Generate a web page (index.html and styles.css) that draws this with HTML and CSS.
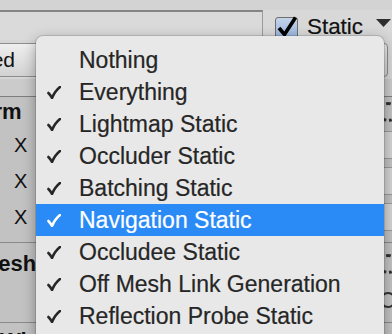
FILE: index.html
```html
<!DOCTYPE html>
<html lang="en">
<head>
    <meta charset="UTF-8">
    <title>Static Flags Menu</title>
    <link rel="stylesheet" href="styles.css">
</head>
<body>
    <div class="inspector">
        <div class="header-row">
            <div class="name-field"></div>
            <div class="static-toggle">
                <span class="checkbox">
                    <svg width="22" height="22" viewBox="0 0 22 22"><path d="M3 12 L8.5 18.5 L19.5 1.5" fill="none" stroke="#000" stroke-width="3.6" stroke-linejoin="miter"/></svg>
                </span>
                <span class="static-label">Static</span>
                <svg class="caret" width="15" height="8" viewBox="0 0 15 8"><path d="M0 0 H15 L7.5 8 Z" fill="#2e2e2e"/></svg>
            </div>
        </div>

        <div class="tag-row">
            <div class="tag-field">Untagged</div>
            <div class="layer-field">Default</div>
        </div>
        <div class="spacer-row"></div>

        <!-- Transform component -->
        <section class="component">
            <div class="component-header">
                <span class="component-title">Transform</span>
                <span class="gear"></span>
            </div>
            <div class="prop-row"><span class="axis">X</span><span class="value-field"></span></div>
            <div class="prop-row"><span class="axis">X</span><span class="value-field"></span></div>
            <div class="prop-row"><span class="axis">X</span><span class="value-field"></span></div>
        </section>

        <!-- Mesh component -->
        <section class="component mesh">
            <div class="component-header">
                <span class="component-title">Mesh</span>
                <span class="gear"></span>
            </div>
            <div class="prop-row tall"><span class="axis"></span><span class="target"></span></div>
        </section>

        <div class="footer-row">Wi</div>
    </div>

    <ul class="flags-menu">
        <li class="menu-item"><span class="check"></span>Nothing</li>
        <li class="menu-item checked"><span class="check"><svg width="14" height="13" viewBox="0 0 14 13"><path d="M1.4 7 Q3.4 8.8 5 12 Q8 5 13 1" fill="none" stroke="currentColor" stroke-width="2.6" stroke-linecap="round"/></svg></span>Everything</li>
        <li class="menu-item checked"><span class="check"><svg width="14" height="13" viewBox="0 0 14 13"><path d="M1.4 7 Q3.4 8.8 5 12 Q8 5 13 1" fill="none" stroke="currentColor" stroke-width="2.6" stroke-linecap="round"/></svg></span>Lightmap Static</li>
        <li class="menu-item checked"><span class="check"><svg width="14" height="13" viewBox="0 0 14 13"><path d="M1.4 7 Q3.4 8.8 5 12 Q8 5 13 1" fill="none" stroke="currentColor" stroke-width="2.6" stroke-linecap="round"/></svg></span>Occluder Static</li>
        <li class="menu-item checked"><span class="check"><svg width="14" height="13" viewBox="0 0 14 13"><path d="M1.4 7 Q3.4 8.8 5 12 Q8 5 13 1" fill="none" stroke="currentColor" stroke-width="2.6" stroke-linecap="round"/></svg></span>Batching Static</li>
        <li class="menu-item checked active"><span class="check"><svg width="14" height="13" viewBox="0 0 14 13"><path d="M1.4 7 Q3.4 8.8 5 12 Q8 5 13 1" fill="none" stroke="currentColor" stroke-width="2.6" stroke-linecap="round"/></svg></span>Navigation Static</li>
        <li class="menu-item checked"><span class="check"><svg width="14" height="13" viewBox="0 0 14 13"><path d="M1.4 7 Q3.4 8.8 5 12 Q8 5 13 1" fill="none" stroke="currentColor" stroke-width="2.6" stroke-linecap="round"/></svg></span>Occludee Static</li>
        <li class="menu-item checked"><span class="check"><svg width="14" height="13" viewBox="0 0 14 13"><path d="M1.4 7 Q3.4 8.8 5 12 Q8 5 13 1" fill="none" stroke="currentColor" stroke-width="2.6" stroke-linecap="round"/></svg></span>Off Mesh Link Generation</li>
        <li class="menu-item checked"><span class="check"><svg width="14" height="13" viewBox="0 0 14 13"><path d="M1.4 7 Q3.4 8.8 5 12 Q8 5 13 1" fill="none" stroke="currentColor" stroke-width="2.6" stroke-linecap="round"/></svg></span>Reflection Probe Static</li>
    </ul>
</body>
</html>
```

FILE: styles.css
```css
:root {
    --panel-bg: #c2c2c2;
    --menu-bg: #e8e8e8;
    --menu-text: #262626;
    --highlight: #2a8af6;
    --divider: #7e7e7e;
}

body {
    margin: 0;
    width: 392px;
    height: 334px;
    overflow: hidden;
    position: relative;
    font-family: "Liberation Sans", Arial, sans-serif;
    background-color: var(--panel-bg);
}

.inspector {
    display: flex;
    flex-direction: column;
}

/* top row: name field + static toggle */
.header-row {
    display: flex;
    align-items: flex-start;
    height: 40px;
    padding-top: 10px;
    box-sizing: border-box;
    background: linear-gradient(#d3d3d3 0, #d3d3d3 10px, #d8d8d8 10px);
}

.name-field {
    width: 262px;
    height: 28px;
    border-top: 2px solid #858585;
    border-right: 1px solid #9c9c9c;
    background-color: #dadada;
}

.static-toggle {
    display: flex;
    align-items: center;
    height: 30px;
    margin-left: 12px;
}

.checkbox {
    width: 21px;
    height: 21px;
    margin-top: 6px;
    border: 1px solid #6e6e6e;
    border-radius: 3px;
    background: linear-gradient(#c4d4ea, #93b2dc);
    position: relative;
}

.checkbox svg {
    position: absolute;
    left: 0;
    top: -2px;
}

.static-label {
    margin-left: 9px;
    margin-top: 3px;
    font-size: 22.4px;
    color: #111;
    -webkit-text-stroke: 0.2px #111;
}

.caret {
    margin-left: 13px;
    margin-top: -4px;
}

/* tag / layer row */
.tag-row {
    display: flex;
    align-items: center;
    justify-content: space-between;
    height: 39px;
    background-color: #d6d6d6;
}

.tag-field,
.layer-field {
    display: flex;
    align-items: center;
    height: 34px;
    box-sizing: border-box;
    border: 1px solid #8e8e8e;
    border-radius: 4px;
    background: linear-gradient(#efefef, #d2d2d2);
    font-size: 21px;
    color: #111;
    overflow: hidden;
    white-space: nowrap;
}

.tag-field {
    width: 80px;
    margin-left: -20px;
    justify-content: flex-end;
    padding-right: 44px;
    border-left: none;
}

.layer-field {
    width: 120px;
    margin-right: 4px;
    padding-left: 10px;
}

.spacer-row {
    height: 17px;
    background-color: #cbcbcb;
    border-bottom: 1px solid var(--divider);
}

/* components */
.component {
    display: flex;
    flex-direction: column;
    padding-bottom: 7px;
    border-bottom: 1px solid #8a8a8a;
}

.component-header {
    display: flex;
    align-items: center;
    justify-content: space-between;
    height: 30px;
}

.component-title {
    font-weight: bold;
    font-size: 22px;
    color: #111;
    margin-left: -86px;
}

.mesh .component-title {
    margin-left: -20px;
}

.mesh .component-header {
    height: 42px;
}

.gear {
    width: 14px;
    height: 14px;
    margin-right: -6px;
    border: 3px dotted #333;
    border-radius: 50%;
}

.prop-row {
    display: flex;
    align-items: center;
    justify-content: space-between;
    height: 36px;
}

.prop-row.tall {
    height: 30px;
}

.axis {
    margin-left: 14px;
    font-size: 20px;
    color: #111;
}

.value-field {
    width: 60px;
    height: 26px;
    margin-right: -4px;
    border: 1px solid #9a9a9a;
    border-radius: 3px;
    background-color: #d4d4d4;
}

.target {
    width: 12px;
    height: 12px;
    margin-right: -4px;
    border: 2px solid #333;
    border-radius: 50%;
}

.footer-row {
    height: 30px;
    padding-top: 5px;
    font-size: 22px;
    font-weight: bold;
    color: #111;
    box-sizing: border-box;
}

/* static flags dropdown */
.flags-menu {
    position: absolute;
    left: 36px;
    top: 36px;
    width: 348px;
    height: 320px;
    margin: 0;
    padding: 8px 0 0;
    box-sizing: border-box;
    list-style: none;
    background-color: var(--menu-bg);
    border-radius: 7px 7px 0 0;
    box-shadow: 0 0 0 1px rgba(0, 0, 0, 0.12), 0 4px 14px rgba(0, 0, 0, 0.35);
}

.menu-item {
    display: flex;
    align-items: center;
    height: 32px;
    padding-left: 11px;
    font-size: 23px;
    color: var(--menu-text);
    -webkit-text-stroke: 0.2px currentColor;
}

.check {
    display: flex;
    align-items: center;
    width: 32px;
    height: 32px;
    padding-top: 1px;
    box-sizing: border-box;
}

.menu-item.active {
    background-color: var(--highlight);
    color: #fff;
}
```
